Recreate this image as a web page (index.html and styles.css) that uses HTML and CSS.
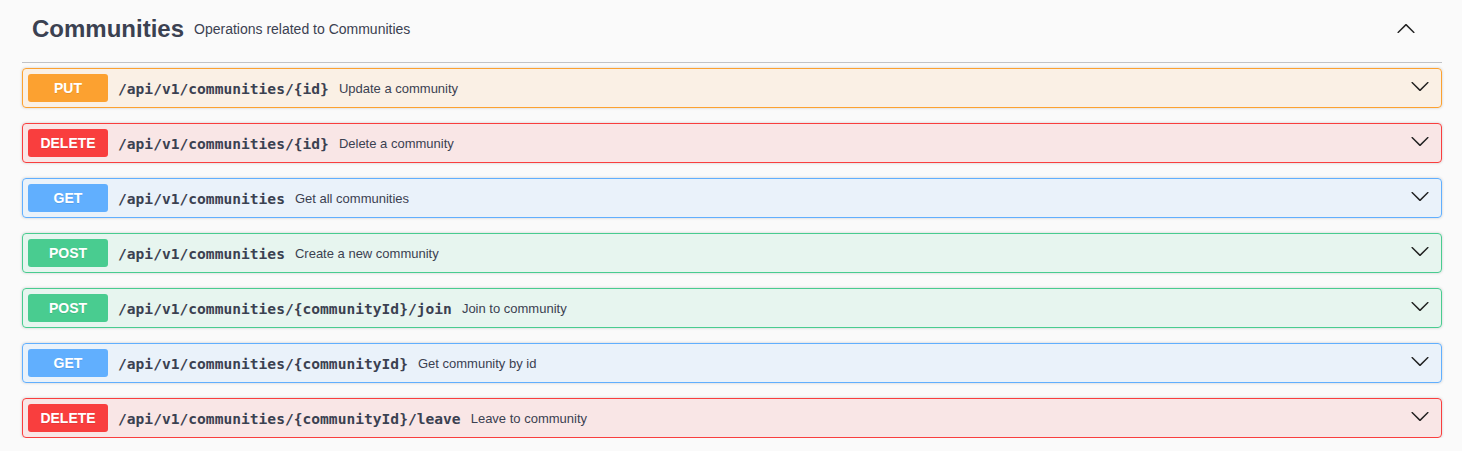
FILE: index.html
```html
<!DOCTYPE html>
<html lang="en">
<head>
<meta charset="utf-8">
<title>Communities</title>
<link rel="stylesheet" href="styles.css">
</head>
<body>
<div class="wrap">
  <div class="tag">
    <span class="tag-title">Communities</span>
    <span class="tag-desc">Operations related to Communities</span>
    <svg class="arrow-up" width="20" height="20" viewBox="0 0 20 20"><path d="M17.418 14.908c.272.268.709.268.979 0s.271-.701 0-.969l-7.908-7.83c-.27-.268-.707-.268-.979 0l-7.908 7.83c-.27.268-.27.701 0 .969.271.268.709.268.979 0L10 7.767l7.418 7.141z"/></svg>
  </div>
  <div class="ops">
    <div class="op op-put">
      <span class="method">PUT</span>
      <span class="path">/api/v1/communities/{id}</span>
      <span class="desc">Update a community</span>
      <svg class="arrow" width="20" height="20" viewBox="0 0 20 20"><path d="M17.418 6.109c.272-.268.709-.268.979 0s.271.701 0 .969l-7.908 7.83c-.27.268-.707.268-.979 0l-7.908-7.83c-.27-.268-.27-.701 0-.969.271-.268.709-.268.979 0L10 13.25l7.418-7.141z"/></svg>
    </div>
    <div class="op op-delete">
      <span class="method">DELETE</span>
      <span class="path">/api/v1/communities/{id}</span>
      <span class="desc">Delete a community</span>
      <svg class="arrow" width="20" height="20" viewBox="0 0 20 20"><path d="M17.418 6.109c.272-.268.709-.268.979 0s.271.701 0 .969l-7.908 7.83c-.27.268-.707.268-.979 0l-7.908-7.83c-.27-.268-.27-.701 0-.969.271-.268.709-.268.979 0L10 13.25l7.418-7.141z"/></svg>
    </div>
    <div class="op op-get">
      <span class="method">GET</span>
      <span class="path">/api/v1/communities</span>
      <span class="desc">Get all communities</span>
      <svg class="arrow" width="20" height="20" viewBox="0 0 20 20"><path d="M17.418 6.109c.272-.268.709-.268.979 0s.271.701 0 .969l-7.908 7.83c-.27.268-.707.268-.979 0l-7.908-7.830c-.27-.268-.27-.701 0-.969.271-.268.709-.268.979 0L10 13.25l7.418-7.141z"/></svg>
    </div>
    <div class="op op-post">
      <span class="method">POST</span>
      <span class="path">/api/v1/communities</span>
      <span class="desc">Create a new community</span>
      <svg class="arrow" width="20" height="20" viewBox="0 0 20 20"><path d="M17.418 6.109c.272-.268.709-.268.979 0s.271.701 0 .969l-7.908 7.83c-.27.268-.707.268-.979 0l-7.908-7.83c-.27-.268-.27-.701 0-.969.271-.268.709-.268.979 0L10 13.25l7.418-7.141z"/></svg>
    </div>
    <div class="op op-post">
      <span class="method">POST</span>
      <span class="path">/api/v1/communities/{communityId}/join</span>
      <span class="desc">Join to community</span>
      <svg class="arrow" width="20" height="20" viewBox="0 0 20 20"><path d="M17.418 6.109c.272-.268.709-.268.979 0s.271.701 0 .969l-7.908 7.83c-.27.268-.707.268-.979 0l-7.908-7.83c-.27-.268-.27-.701 0-.969.271-.268.709-.268.979 0L10 13.25l7.418-7.141z"/></svg>
    </div>
    <div class="op op-get">
      <span class="method">GET</span>
      <span class="path">/api/v1/communities/{communityId}</span>
      <span class="desc">Get community by id</span>
      <svg class="arrow" width="20" height="20" viewBox="0 0 20 20"><path d="M17.418 6.109c.272-.268.709-.268.979 0s.271.701 0 .969l-7.908 7.83c-.27.268-.707.268-.979 0l-7.908-7.83c-.27-.268-.27-.701 0-.969.271-.268.709-.268.979 0L10 13.25l7.418-7.141z"/></svg>
    </div>
    <div class="op op-delete">
      <span class="method">DELETE</span>
      <span class="path">/api/v1/communities/{communityId}/leave</span>
      <span class="desc">Leave to community</span>
      <svg class="arrow" width="20" height="20" viewBox="0 0 20 20"><path d="M17.418 6.109c.272-.268.709-.268.979 0s.271.701 0 .969l-7.908 7.83c-.27.268-.707.268-.979 0l-7.908-7.83c-.27-.268-.27-.701 0-.969.271-.268.709-.268.979 0L10 13.25l7.418-7.141z"/></svg>
    </div>
  </div>
</div>
</body>
</html>
```

FILE: styles.css
```css
html, body {
  margin: 0;
  padding: 0;
  background: #fafafa;
}

body {
  font-family: "Liberation Sans", Arial, sans-serif;
  color: #3b4151;
}

.wrap {
  padding: 0 20px 0 22px;
}

.tag {
  display: flex;
  align-items: center;
  height: 63px;
  box-sizing: border-box;
  padding: 0 26px 4px 10px;
  border-bottom: 1px solid rgba(59, 65, 81, 0.3);
  margin-bottom: 5px;
}

.tag-title {
  font-size: 24px;
  font-weight: bold;
  color: #3b4151;
}

.tag-desc {
  flex: 1;
  padding: 0 10px;
  font-size: 14px;
  color: #3b4151;
}

.arrow-up {
  fill: #222;
  margin-bottom: 2px;
}

.ops {
  display: flex;
  flex-direction: column;
  gap: 15px;
}

.op {
  display: flex;
  align-items: center;
  padding: 5px;
  border: 1px solid;
  border-radius: 4px;
  box-shadow: 0 0 3px rgba(0, 0, 0, 0.19);
}

.method {
  min-width: 80px;
  box-sizing: border-box;
  padding: 6px 0;
  text-align: center;
  font-size: 14px;
  line-height: 16px;
  font-weight: bold;
  color: #fff;
  border-radius: 3px;
  text-shadow: 0 1px 0 rgba(0, 0, 0, 0.1);
}

.path {
  padding: 0 10px;
  font-family: "DejaVu Sans Mono", "Liberation Mono", monospace;
  font-size: 14.6px;
  font-weight: bold;
  color: #3b4151;
}

.desc {
  flex: 1;
  font-size: 13px;
  color: #3b4151;
}

.arrow {
  fill: #222;
  margin: 0 6px 4px 0;
}

.op-put {
  background: rgba(252, 161, 48, 0.1);
  border-color: #fca130;
}
.op-put .method { background: #fca130; }

.op-delete {
  background: rgba(249, 62, 62, 0.1);
  border-color: #f93e3e;
}
.op-delete .method { background: #f93e3e; }

.op-get {
  background: rgba(97, 175, 254, 0.1);
  border-color: #61affe;
}
.op-get .method { background: #61affe; }

.op-post {
  background: rgba(73, 204, 144, 0.1);
  border-color: #49cc90;
}
.op-post .method { background: #49cc90; }
```
